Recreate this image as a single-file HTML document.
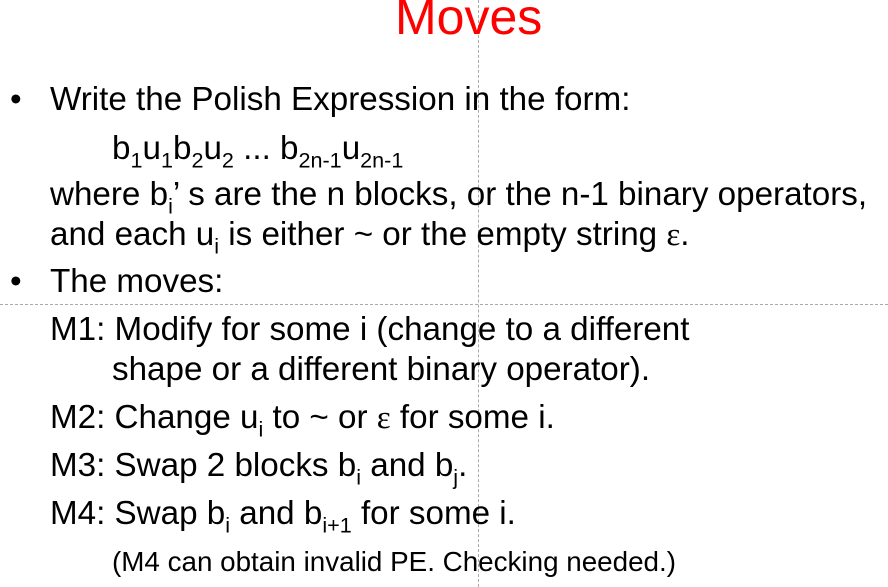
<!DOCTYPE html>
<html><head><meta charset="utf-8"><style>
html,body{margin:0;padding:0;background:#fff;}
body{width:888px;height:587px;position:relative;overflow:hidden;font-family:"Liberation Sans",Arial,sans-serif;color:#000;}
.l{position:absolute;white-space:nowrap;font-size:33.2px;line-height:1;}
sub{font-size:0.65em;vertical-align:-0.4em;line-height:0;}
.e{font-family:"Liberation Serif",serif;}
.vd{position:absolute;left:478px;top:0;height:587px;border-left:1px dashed #aaa;}
.hd{position:absolute;top:304px;left:0;width:888px;border-top:1px dashed #aaa;}
</style></head><body>
<div class="vd"></div><div class="hd"></div>
<div class="l" style="left:395px;top:-8px;font-size:50px;color:#f00;">Moves</div>
<div class="l" style="left:10px;top:83px;">•</div>
<div class="l" style="left:50px;top:83px;">Write the Polish Expression in the form:</div>
<div class="l" style="left:112px;top:132px;">b<sub>1</sub>u<sub>1</sub>b<sub>2</sub>u<sub>2</sub> ... b<sub>2n-1</sub>u<sub>2n-1</sub></div>
<div class="l" style="left:50px;top:178px;">where b<sub>i</sub>’ s are the n blocks, or the n-1 binary operators,</div>
<div class="l" style="left:50px;top:218px;">and each u<sub>i</sub> is either ~ or the empty string <span class="e">ε</span>.</div>
<div class="l" style="left:10px;top:265px;">•</div>
<div class="l" style="left:50px;top:265px;">The moves:</div>
<div class="l" style="left:50px;top:313px;">M1: Modify for some i (change to a different</div>
<div class="l" style="left:112px;top:353px;">shape or a different binary operator).</div>
<div class="l" style="left:50px;top:401px;">M2: Change u<sub>i</sub> to ~ or <span class="e">ε</span> for some i.</div>
<div class="l" style="left:50px;top:449px;">M3: Swap 2 blocks b<sub>i</sub> and b<sub>j</sub>.</div>
<div class="l" style="left:50px;top:497px;">M4: Swap b<sub>i</sub> and b<sub>i+1</sub> for some i.</div>
<div class="l" style="left:112px;top:548px;font-size:27.8px;">(M4 can obtain invalid PE. Checking needed.)</div>
</body></html>
